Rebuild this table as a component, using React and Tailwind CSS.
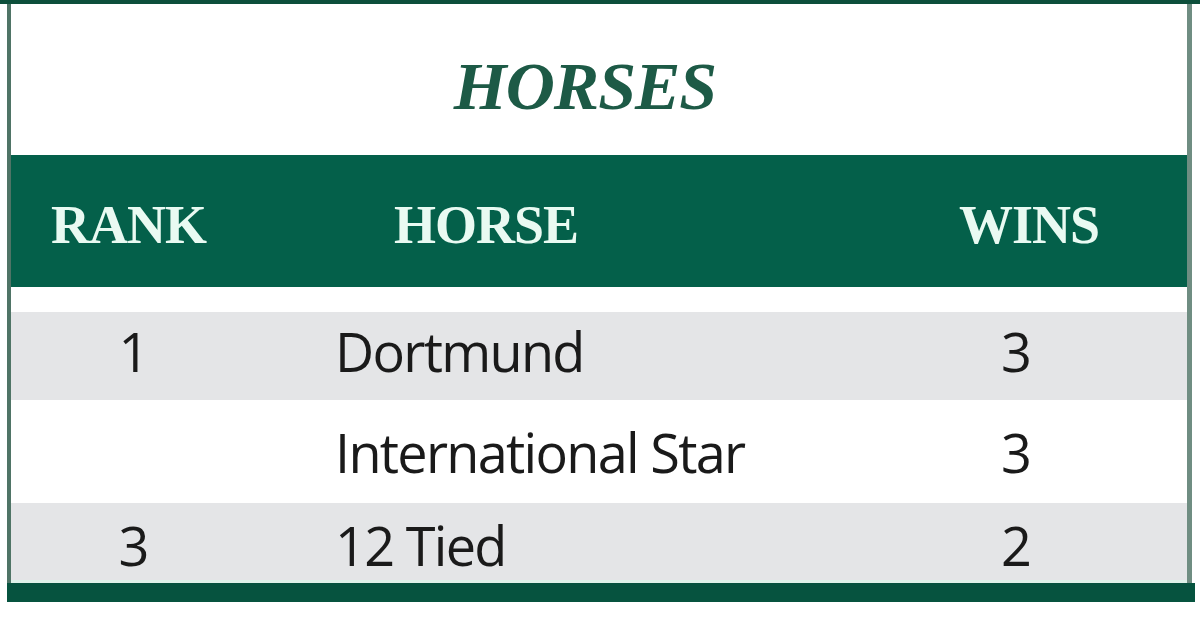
const rows = [
  { rank: '1', horse: 'Dortmund', wins: '3', shade: true, h: 'h-[88px] pb-[10px]' },
  { rank: '', horse: 'International Star', wins: '3', shade: false, h: 'h-[103px]' },
  { rank: '3', horse: '12 Tied', wins: '2', shade: true, h: 'h-[77px] pt-[7px]' },
]

export default function App() {
  return (
    <div className="w-[1200px] h-[633px] bg-white overflow-hidden relative">
      {/* top rule */}
      <div className="h-[4px] bg-[#0d4f3b]" />
      <div className="ml-[7px] w-[1185px] border-l-[4px] border-r-[5px] border-l-[#4f7466] border-r-[#6f8d82] flex flex-col">
        {/* title */}
        <div className="h-[151px] flex items-center justify-center pt-[12px]">
          <h1 className="font-['Liberation_Serif',serif] italic font-bold text-[68px] leading-none text-[#1d5a46] tracking-[-1px] ml-[-28px]">
            HORSES
          </h1>
        </div>

        {/* header bar */}
        <div className="h-[132px] bg-[#04604a] flex items-center font-['Liberation_Serif',serif] font-bold text-[54px] leading-none text-[#e9faf2] tracking-[-1px] pt-[8px]">
          <div className="w-[244px] pl-[40px]">RANK</div>
          <div className="w-[520px] pl-[139px]">HORSE</div>
          <div className="flex-1 pl-[184px]">WINS</div>
        </div>

        <div className="h-[25px]" />

        {/* body rows */}
        {rows.map((r, i) => (
          <div
            key={i}
            className={`${r.h} ${r.shade ? 'bg-[#e4e5e7]' : 'bg-white'} flex items-center font-['Open_Sans',sans-serif] font-medium text-[54px] leading-none text-[#1a1a1a] tracking-[-1.7px]`}
          >
            <div className="w-[244px] text-center">{r.rank}</div>
            <div className="w-[520px] pl-[80px]">{r.horse}</div>
            <div className="flex-1 pl-[226px]">{r.wins}</div>
          </div>
        ))}
        <div className="h-[3px] bg-[#dff3ea]" />
      </div>
      {/* bottom rule */}
      <div className="ml-[7px] w-[1188px] h-[19px] bg-[#06533f]" />
    </div>
  )
}
